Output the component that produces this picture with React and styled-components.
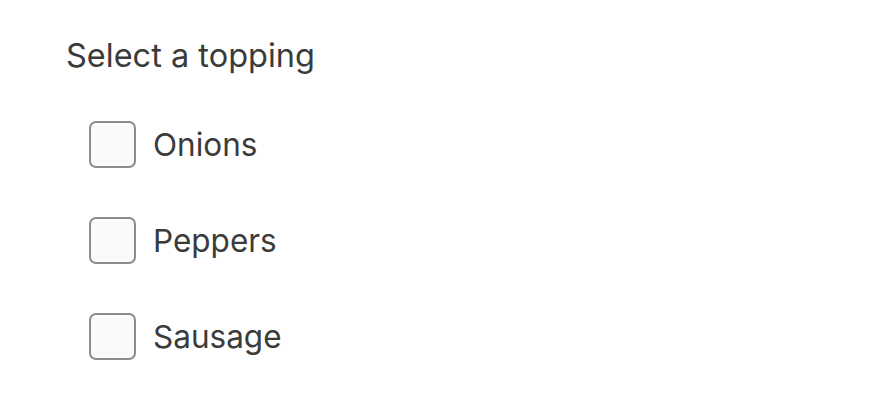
import React from "react";
import styled, { createGlobalStyle } from "styled-components";

const GlobalStyle = createGlobalStyle`
  body {
    margin: 0;
    background: #ffffff;
    font-family: Inter, "Noto Sans", sans-serif;
  }
`;

const Fieldset = styled.fieldset`
  border: none;
  margin: 0;
  padding: 38px 0 0 66px;
  display: flex;
  flex-direction: column;
`;

const Legend = styled.div`
  font-size: 32.5px;
  line-height: 36px;
  color: #3b3b3b;
  margin-bottom: 47px;
`;

const List = styled.div`
  display: flex;
  flex-direction: column;
  gap: 49px;
  padding-left: 23px;
`;

const Row = styled.label`
  display: flex;
  align-items: center;
  gap: 17px;
  cursor: pointer;
`;

const Box = styled.input.attrs({ type: "checkbox" })`
  appearance: none;
  margin: 0;
  width: 47px;
  height: 47px;
  box-sizing: border-box;
  border: 2px solid #8c8c8c;
  border-radius: 7px;
  background: #fafafa;
`;

const Label = styled.span`
  font-size: 31.5px;
  line-height: 36px;
  color: #3b3b3b;
`;

const toppings = ["Onions", "Peppers", "Sausage"];

const App = () => {
  return (
    <>
      <GlobalStyle />
      <Fieldset>
        <Legend>Select a topping</Legend>
        <List>
          {toppings.map((t) => (
            <Row key={t}>
              <Box />
              <Label>{t}</Label>
            </Row>
          ))}
        </List>
      </Fieldset>
    </>
  );
};

export default App;
